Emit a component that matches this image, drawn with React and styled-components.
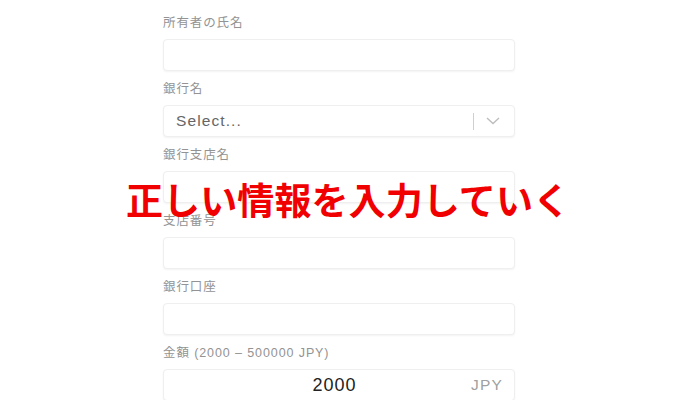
import React from 'react';
import styled, { createGlobalStyle } from 'styled-components';

/* CSS---------------------------------------------------------------------*/
const GlobalStyle = createGlobalStyle`
  html, body {
    margin: 0;
    padding: 0;
    background: #FFFFFF;
  }
  body {
    font-family: "Liberation Sans", "Noto Sans CJK JP", sans-serif;
  }
`;

// Page wrapper, holds the form and the caption laid over it
const Page = styled.main`
  position: relative;
  width: 700px;
  height: 400px;
  overflow: hidden;
  background: #FFFFFF;
`;

// Column of fields
const Form = styled.form`
  width: 352px;
  padding: 15px 0 0 163px;
  display: flex;
  flex-direction: column;
`;

const Field = styled.div`
  display: flex;
  flex-direction: column;
  gap: 8px;
  margin-bottom: 10px;
`;

const Label = styled.label`
  font-size: 12.5px;
  line-height: 16px;
  letter-spacing: 0.9px;
  color: #939393;
  white-space: nowrap;
`;

const Box = styled.div`
  box-sizing: border-box;
  height: 32px;
  border: 1px solid #EFEFEF;
  border-radius: 4px;
  box-shadow: 0 1px 2px rgba(0, 0, 0, 0.05);
  background: #FFFFFF;
  display: flex;
  align-items: center;
  padding: 0 12px;
`;

const Placeholder = styled.span`
  flex: 1;
  font-size: 15.5px;
  letter-spacing: 1.1px;
  color: #666666;
`;

const Separator = styled.span`
  width: 1px;
  height: 17px;
  background: #CFCFCF;
  margin-right: 12px;
`;

const Chevron = styled.svg`
  width: 14px;
  height: 8px;
  margin-right: 2px;
`;

const Amount = styled.span`
  flex: 1;
  text-align: center;
  padding-left: 22px;
  font-size: 18px;
  letter-spacing: 1px;
  color: #222222;
`;

const Unit = styled.span`
  font-size: 15.5px;
  letter-spacing: 1.2px;
  color: #A0A0A0;
  margin-right: -1px;
`;

// Red caption laid over the form
const Caption = styled.div`
  position: absolute;
  top: 175px;
  left: 126px;
  font-family: "Noto Sans CJK JP", sans-serif;
  font-weight: 700;
  font-size: 37px;
  line-height: 48px;
  letter-spacing: 0.1px;
  color: #F00000;
  white-space: nowrap;
`;
/*-------------------------------------------------------------------------*/

/* Arrays------------------------------------------------------------------*/
const fields = [
  { id: 1, label: '所有者の氏名' },
  { id: 2, label: '銀行名', select: true },
  { id: 3, label: '銀行支店名' },
  { id: 4, label: '支店番号' },
  { id: 5, label: '銀行口座' },
  { id: 6, label: '金額 (2000 – 500000 JPY)', amount: '2000' },
];
/*-------------------------------------------------------------------------*/

/* Render------------------------------------------------------------------*/
const FormField = ({ label, select, amount }) => (
  <Field>
    <Label>{label}</Label>
    <Box>
      {select && (
        <>
          <Placeholder>Select...</Placeholder>
          <Separator />
          <Chevron viewBox="0 0 14 8">
            <polyline points="1,1 7,6.5 13,1" fill="none" stroke="#BDBDBD" strokeWidth="1.4" />
          </Chevron>
        </>
      )}
      {amount && (
        <>
          <Amount>{amount}</Amount>
          <Unit>JPY</Unit>
        </>
      )}
    </Box>
  </Field>
);

export default function App() {
  return (
    <Page>
      <GlobalStyle />
      <Form>
        {fields.map(f => <FormField key={f.id} {...f} />)}
      </Form>
      <Caption>正しい情報を入力していく</Caption>
    </Page>
  );
}
/*-------------------------------------------------------------------------*/
